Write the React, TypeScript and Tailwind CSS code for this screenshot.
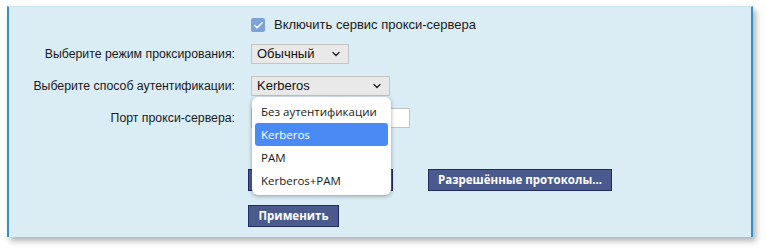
import { Check, ChevronDown } from "lucide-react";

const labelFont = { fontFamily: '"Liberation Sans", Arial, sans-serif' };
const uiFont = { fontFamily: '"Open Sans", "Noto Sans", sans-serif' };

// Выпадающий список способов аутентификации (открыт)
const AuthOptions = () => {
    const options = ["Без аутентификации", "Kerberos", "PAM", "Kerberos+PAM"];
    return (
        <div
            className="absolute left-[1px] top-[21px] z-10 w-[139px] rounded-[6px] bg-white py-[3px] shadow-[0_1px_4px_rgba(0,0,0,0.35)]"
            style={uiFont}
        >
            {options.map((opt) => (
                <div
                    key={opt}
                    className={
                        opt === "Kerberos"
                            ? "mx-[3px] flex h-[23px] items-center whitespace-nowrap rounded-[3px] bg-[#4a8af4] px-[6px] text-[11.5px] text-white"
                            : "mx-[3px] flex h-[23px] items-center whitespace-nowrap px-[6px] text-[11.5px] text-[#1a1a1a]"
                    }
                >
                    {opt}
                </div>
            ))}
        </div>
    );
};

const Select = ({ value, width }: { value: string; width: string }) => (
    <div className={`flex h-[20px] ${width} items-center justify-between border border-[#c4c4c4] bg-[#e9e9e9] pl-[5px] pr-[6px] text-[13px] text-[#111]`}>
        <span>{value}</span>
        <ChevronDown size={12} strokeWidth={2.6} className="text-[#222]" />
    </div>
);

const Button = ({ children, width }: { children?: React.ReactNode; width: string }) => (
    <button
        className={`h-[22px] ${width} whitespace-nowrap border border-[#1e2c63] bg-[#4a5a8c] text-[11.5px] font-bold text-white`}
        style={uiFont}
    >
        {children}
    </button>
);

export default function App() {
    return (
        <div className="h-[251px] w-[766px] bg-white pl-[7px] pt-[6px]" style={labelFont}>
            <div className="h-[231px] w-[746px] border-x-2 border-t border-x-[#3b8cc4] border-t-[#c9e3ee] bg-[#daedf4] shadow-[3px_4px_6px_rgba(0,0,0,0.3)]">
                <div className="grid grid-cols-[226px_1fr] gap-x-[16px] pt-[10px] text-[13px] text-[#1a1a1a]">
                    <div />
                    <label className="flex h-[16px] items-center gap-[9px]">
                        <span className="flex h-[14px] w-[14px] items-center justify-center rounded-[2px] bg-[#7ea3da]">
                            <Check size={11} strokeWidth={3} className="text-white" />
                        </span>
                        Включить сервис прокси-сервера
                    </label>

                    <div className="mt-[11px] flex h-[20px] items-center justify-end text-[12.3px]">Выберите режим проксирования:</div>
                    <div className="mt-[11px]">
                        <Select value="Обычный" width="w-[98px]" />
                    </div>

                    <div className="mt-[12px] flex h-[20px] items-center justify-end text-[12.3px]">Выберите способ аутентификации:</div>
                    <div className="relative mt-[12px]">
                        <Select value="Kerberos" width="w-[139px]" />
                        <AuthOptions />
                    </div>

                    <div className="mt-[12px] flex h-[20px] items-center justify-end text-[12.3px]">Порт прокси-сервера:</div>
                    <div className="mt-[12px]">
                        <div className="h-[20px] w-[159px] border border-[#c4c4c4] bg-white" />
                    </div>

                    <div />
                    <div className="-ml-[3px] mt-[41px] flex gap-[35px]">
                        {/* кнопка под выпадающим списком — текст не виден */}
                        <Button width="w-[145px]" />
                        <Button width="w-[184px]">Разрешённые протоколы...</Button>
                    </div>

                    <div />
                    <div className="-ml-[3px] mt-[14px]">
                        <Button width="w-[91px]">Применить</Button>
                    </div>
                </div>
            </div>
        </div>
    );
}
